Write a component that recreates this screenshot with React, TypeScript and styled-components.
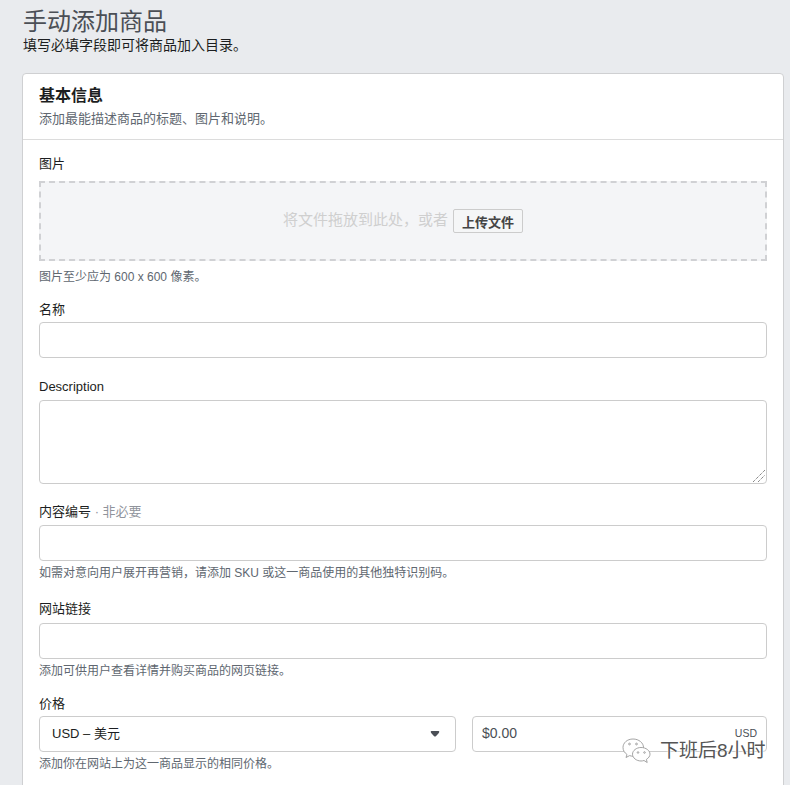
import styled, { createGlobalStyle } from 'styled-components'

const GlobalStyle = createGlobalStyle`
  html, body {
    margin: 0;
    padding: 0;
    height: 785px;
    overflow: hidden;
    background: #e9ebee;
  }
  * {
    box-sizing: border-box;
    font-family: 'Liberation Sans', 'Noto Sans CJK SC', sans-serif;
  }
`

const Page = styled.div`
  position: relative;
  height: 785px;
  overflow: hidden;
  padding: 8px 6px 0 22px;
`

const PageTitle = styled.h1`
  margin: 0 0 0 1px;
  font-size: 24px;
  line-height: 28px;
  font-weight: 400;
  color: #4b4f56;
`

const PageSub = styled.p`
  margin: 1px 0 19px 1px;
  font-size: 14px;
  line-height: 17px;
  color: #1c1e21;
`

const Card = styled.section`
  background: #fff;
  border: 1px solid #cfd0d2;
  border-radius: 4px 4px 0 0;
  height: 800px;
`

const CardHead = styled.header`
  padding: 11px 16px 12px;
  border-bottom: 1px solid #dcdcdc;
`

const CardTitle = styled.h2`
  margin: 0;
  font-size: 16px;
  line-height: 22px;
  font-weight: 700;
  color: #1c1e21;
`

const CardDesc = styled.p`
  margin: 3px 0 0;
  font-size: 13px;
  line-height: 17px;
  color: #606770;
`

const CardBody = styled.div`
  padding: 15px 16px 0;
`

const Field = styled.div<{ $gap: number }>`
  margin-bottom: ${p => p.$gap}px;
`

const Label = styled.label<{ $gap: number }>`
  display: block;
  font-size: 13px;
  line-height: 17px;
  margin-bottom: ${p => p.$gap}px;
  color: #1c1e21;
`

const Optional = styled.span`
  color: #90949c;
`

const Hint = styled.p`
  margin: 4px 0 0;
  font-size: 12px;
  line-height: 16px;
  color: #606770;
`

const DropZone = styled.div`
  height: 80px;
  margin-bottom: 8px;
  border: 2px dashed #d0d1d4;
  background: #f4f5f7;
  display: flex;
  align-items: center;
  justify-content: center;
  gap: 5px;
  font-size: 15px;
  color: #cfcfcf;
`

const DropText = styled.span`
  margin-bottom: 5px;
`

const UploadButton = styled.button`
  height: 24px;
  width: 70px;
  padding: 0;
  border: 1px solid #cccccc;
  border-radius: 2px;
  background: #f5f6f7;
  font-size: 13px;
  font-weight: 700;
  color: #444;
`

const TextInput = styled.input`
  display: block;
  width: 100%;
  height: 36px;
  padding: 0 12px;
  border: 1px solid #cccccc;
  border-radius: 4px;
  background: #fff;
  outline: none;
`

const TextAreaWrap = styled.div`
  position: relative;
  height: 84px;
`

const TextArea = styled.textarea`
  display: block;
  width: 100%;
  height: 100%;
  padding: 8px 12px;
  border: 1px solid #cccccc;
  border-radius: 4px;
  background: #fff;
  outline: none;
  resize: none;
`

const Grip = styled.svg`
  position: absolute;
  right: 1px;
  bottom: 1px;
  width: 14px;
  height: 14px;
  stroke: #555;
  stroke-width: 1;
  stroke-dasharray: 1 1;
  pointer-events: none;
`

const PriceRow = styled.div`
  display: grid;
  grid-template-columns: 417px 1fr;
  gap: 16px;
`

const SelectBox = styled.div`
  height: 36px;
  padding: 0 15px 3px 12px;
  border: 1px solid #cccccc;
  border-radius: 4px;
  display: flex;
  align-items: center;
  justify-content: space-between;
  font-size: 13px;
  color: #1c1e21;
`

const Caret = styled.svg`
  width: 10px;
  height: 6px;
  margin-top: 3px;
  fill: #4b4f56;
`

const PriceBox = styled.div`
  position: relative;
  height: 36px;
  padding: 0 9px 2px;
  border: 1px solid #cccccc;
  border-radius: 4px;
  display: flex;
  align-items: center;
  font-size: 14px;
  color: #4b4f56;
`

const Currency = styled.span`
  position: absolute;
  top: 10px;
  right: 9px;
  font-size: 10.5px;
  line-height: 12px;
  color: #4b4f56;
`

const Watermark = styled.div`
  position: absolute;
  left: 622px;
  top: 738px;
  display: flex;
  align-items: center;
  gap: 8px;
  font-size: 19px;
  line-height: 26px;
  color: #555;
  text-shadow: 0 0 2px #fff, 0 0 2px #fff, 0 0 1px #fff;
`

const WechatIcon = styled.svg`
  width: 30px;
  height: 26px;
  fill: #fff;
  stroke: #9a9a9a;
  stroke-width: 0.9;
`

const App = () => {
  return (
    <>
      <GlobalStyle />
      <Page>
        <PageTitle>手动添加商品</PageTitle>
        <PageSub>填写必填字段即可将商品加入目录。</PageSub>
        <Card>
          <CardHead>
            <CardTitle>基本信息</CardTitle>
            <CardDesc>添加最能描述商品的标题、图片和说明。</CardDesc>
          </CardHead>
          <CardBody>
            <Field $gap={16}>
              <Label $gap={9}>图片</Label>
              <DropZone>
                <DropText>将文件拖放到此处，或者</DropText>
                <UploadButton>上传文件</UploadButton>
              </DropZone>
              <Hint>图片至少应为 600 x 600 像素。</Hint>
            </Field>
            <Field $gap={20}>
              <Label $gap={4}>名称</Label>
              <TextInput />
            </Field>
            <Field $gap={19}>
              <Label $gap={5}>Description</Label>
              <TextAreaWrap>
                <TextArea />
                <Grip viewBox="0 0 14 14">
                  <path d="M1 13 L13 1 M6 13 L13 6" />
                </Grip>
              </TextAreaWrap>
            </Field>
            <Field $gap={19}>
              <Label $gap={5}>内容编号 <Optional>· 非必要</Optional></Label>
              <TextInput />
              <Hint>如需对意向用户展开再营销，请添加 SKU 或这一商品使用的其他独特识别码。</Hint>
            </Field>
            <Field $gap={16}>
              <Label $gap={6}>网站链接</Label>
              <TextInput />
              <Hint>添加可供用户查看详情并购买商品的网页链接。</Hint>
            </Field>
            <Field $gap={0}>
              <Label $gap={4}>价格</Label>
              <PriceRow>
                <SelectBox>
                  USD – 美元
                  <Caret viewBox="0 0 11 7"><path d="M0.5 1 Q0.5 0 1.5 0 H9.5 Q10.5 0 10.5 1 Q10.5 2 9.5 3 L6.5 6 Q5.5 7 4.5 6 L1.5 3 Q0.5 2 0.5 1 Z" /></Caret>
                </SelectBox>
                <PriceBox>
                  $0.00
                  <Currency>USD</Currency>
                </PriceBox>
              </PriceRow>
              <Hint>添加你在网站上为这一商品显示的相同价格。</Hint>
            </Field>
          </CardBody>
        </Card>
        <Watermark>
          <WechatIcon viewBox="0 0 30 26">
            <path d="M11 1 C5 1 1 5 1 9.5 C1 12.5 2.6 14.8 5 16.5 L4 19.5 L7.6 17.6 C8.8 18 9.8 18.2 11 18.2 C17 18.2 21.5 14.2 21.5 9.5 C21.5 5 17 1 11 1 Z" />
            <path d="M19 9.5 C14.4 9.5 10.5 12.6 10.5 16.2 C10.5 19.8 14.4 23 19 23 C20 23 21 22.8 22 22.5 L25.2 24.5 L24.4 21.4 C26.6 20 28 18.2 28 16.2 C28 12.6 24 9.5 19 9.5 Z" />
            <circle cx="7.5" cy="6" r="0.9" />
            <circle cx="14.5" cy="6" r="0.9" />
            <circle cx="16" cy="14.5" r="0.8" />
            <circle cx="22.5" cy="14.5" r="0.8" />
          </WechatIcon>
          下班后8小时
        </Watermark>
      </Page>
    </>
  )
}

export default App
